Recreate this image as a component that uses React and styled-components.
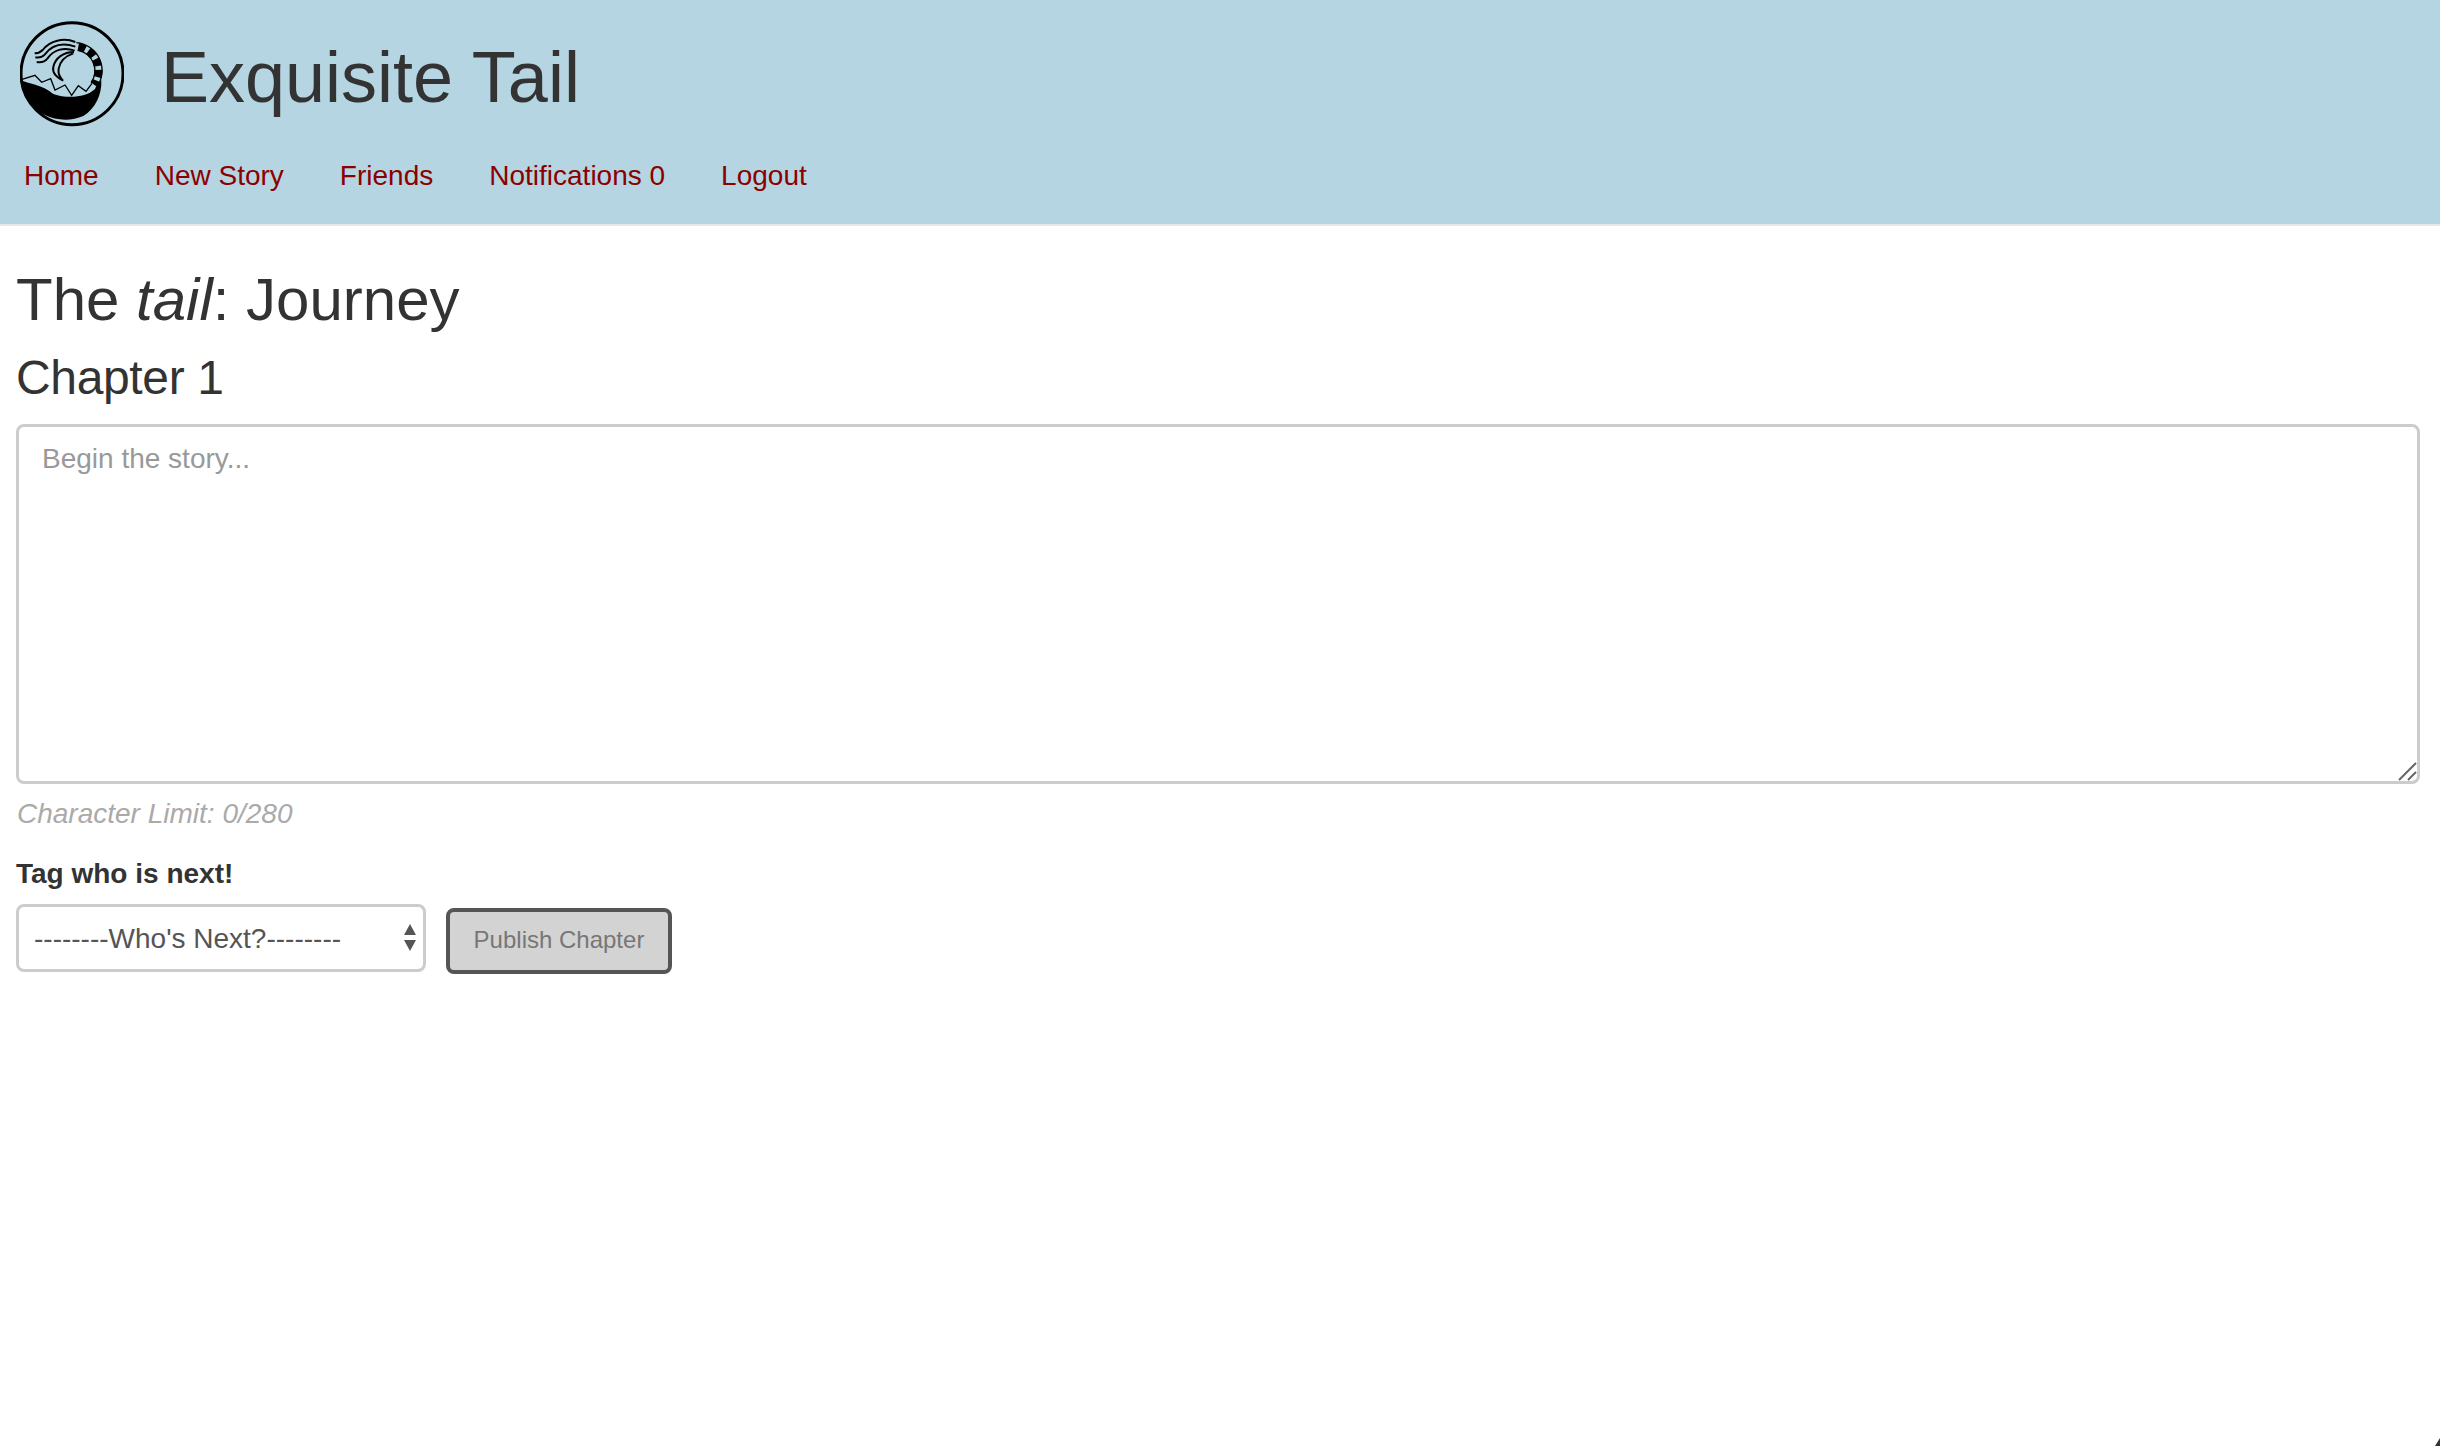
import React from "react";
import styled, { createGlobalStyle } from "styled-components";

const App = () => {
    return (
        <>
            <GlobalStyle />
            <Header>
                <Brand>
                    <Logo />
                    <Title>Exquisite Tail</Title>
                </Brand>
                <Nav>
                    <NavLink href="#">Home</NavLink>
                    <NavLink href="#">New Story</NavLink>
                    <NavLink href="#">Friends</NavLink>
                    <NavLink href="#">Notifications 0</NavLink>
                    <NavLink href="#">Logout</NavLink>
                </Nav>
            </Header>
            <Main>
                <StoryTitle>The <em>tail</em>: Journey</StoryTitle>
                <ChapterTitle>Chapter 1</ChapterTitle>
                <TextareaWrap>
                    <StoryInput placeholder="Begin the story..." />
                    <Grip width="20" height="20" viewBox="0 0 20 20">
                        <path d="M2 19L19 2M11 19L19 11" stroke="#666" strokeWidth="2" fill="none" />
                    </Grip>
                </TextareaWrap>
                <Limit>Character Limit: 0/280</Limit>
                <TagLabel>Tag who is next!</TagLabel>
                <FormRow>
                    <SelectWrap>
                        <NextSelect defaultValue="">
                            <option value="">--------Who's Next?--------</option>
                        </NextSelect>
                    </SelectWrap>
                    <PublishButton disabled>Publish Chapter</PublishButton>
                </FormRow>
            </Main>
            <CornerMark />
        </>
    );
};

// traced from the round wave and tail badge
const Logo = () => (
    <LogoSvg width="104" height="108" viewBox="60 60 312 324">
        <circle cx="216" cy="221" r="153" fill="none" stroke="#000" strokeWidth="9" />
        {/* black crescent */}
        <path
            d="M62 240C90 254 125 252 160 282C200 296 256 294 284 268L304 240C306 284 286 326 250 348C214 364 168 362 135 345C92 325 64 285 62 240Z"
            fill="#000"
        />
        {/* zigzag line over the crescent */}
        <path
            d="M66 238L105 226L125 247L152 236L165 270L195 255L215 286L235 257L258 274L276 250"
            fill="none"
            stroke="#000"
            strokeWidth="4"
        />
        {/* striped tail */}
        <path
            d="M235 140A73 73 0 0 1 282 254"
            fill="none"
            stroke="#000"
            strokeWidth="24"
            strokeDasharray="22 11"
        />
        <path
            d="M229 128A84 84 0 0 1 288 264M233 151A62 62 0 0 1 273 248"
            fill="none"
            stroke="#000"
            strokeWidth="4"
        />
        {/* hair strands */}
        <path
            d="M226 126C190 112 150 122 128 150C120 158 112 160 104 160M226 140C190 128 156 134 134 164C126 172 116 174 106 172M224 152C190 140 160 150 142 176C134 186 122 188 110 186M222 156C190 156 166 174 160 200C156 218 170 232 190 242M220 160C196 168 180 184 176 206C174 220 178 230 186 238"
            fill="none"
            stroke="#000"
            strokeWidth="6"
        />
    </LogoSvg>
);

export default App;

const GlobalStyle = createGlobalStyle`
    * {
        box-sizing: border-box;
    }
    body {
        margin: 0;
        background-color: white;
        color: #333;
        font-family: "Liberation Sans", Arial, sans-serif;
        font-size: 28px;
        line-height: 40px;
    }
`;

const Header = styled.header`
    height: 226px;
    background-color: #b5d5e2;
    border-bottom: 2px solid #e7e7e7;
    padding: 20px 0 0 20px;
`;
const Brand = styled.div`
    display: flex;
    align-items: center;
    gap: 37px;
    height: 108px;
`;
const LogoSvg = styled.svg`
    flex-shrink: 0;
`;
const Title = styled.h1`
    margin: 6px 0 0;
    font-size: 72px;
    font-weight: 400;
    line-height: 80px;
    color: #333;
`;
const Nav = styled.nav`
    display: flex;
    gap: 56px;
    margin: 28px 0 0 4px;
`;
const NavLink = styled.a`
    color: #8b0000;
    text-decoration: none;
    font-size: 28px;
    line-height: 40px;
`;
const Main = styled.main`
    padding: 0 20px 0 16px;
`;
const StoryTitle = styled.h2`
    margin: 41px 0 0;
    font-size: 60px;
    font-weight: 400;
    line-height: 66px;
`;
const ChapterTitle = styled.h3`
    margin: 19px 0 0;
    font-size: 48px;
    font-weight: 400;
    line-height: 52px;
    letter-spacing: -0.35px;
`;
const TextareaWrap = styled.div`
    position: relative;
    margin-top: 20px;
    height: 360px;
`;
const StoryInput = styled.textarea`
    display: block;
    width: 100%;
    height: 100%;
    padding: 12px 23px;
    border: 3px solid #ccc;
    border-radius: 8px;
    outline: none;
    resize: none;
    font-family: inherit;
    font-size: 28px;
    line-height: 40px;
    color: #555;

    &::placeholder {
        color: #999;
        opacity: 1;
    }
`;
const Grip = styled.svg`
    position: absolute;
    right: 3px;
    bottom: 3px;
`;
const Limit = styled.p`
    margin: 10px 0 0 1px;
    font-size: 28px;
    font-style: italic;
    color: #aaa;
`;
const TagLabel = styled.label`
    display: block;
    margin-top: 20px;
    font-weight: 700;
`;
const FormRow = styled.div`
    display: flex;
    align-items: flex-start;
    gap: 20px;
    margin-top: 10px;
`;
const SelectWrap = styled.div`
    position: relative;
    width: 410px;
    height: 68px;

    &::before,
    &::after {
        content: "";
        position: absolute;
        right: 10px;
        border-left: 6px solid transparent;
        border-right: 6px solid transparent;
        pointer-events: none;
    }
    &::before {
        top: 20px;
        border-bottom: 11px solid #555;
    }
    &::after {
        top: 36px;
        border-top: 11px solid #555;
    }
`;
const NextSelect = styled.select`
    appearance: none;
    width: 100%;
    height: 100%;
    padding: 0 15px;
    background-color: white;
    border: 3px solid #ccc;
    border-radius: 8px;
    font-family: inherit;
    font-size: 28px;
    color: #555;
`;
const PublishButton = styled.button`
    margin-top: 4px;
    width: 226px;
    height: 66px;
    padding: 0 0 2px;
    background-color: #d3d3d3;
    border: 4px solid #555;
    border-radius: 8px;
    font-family: inherit;
    font-size: 24px;
    color: #777;
`;
const CornerMark = styled.div`
    position: fixed;
    right: 0;
    bottom: 0;
    width: 0;
    height: 0;
    border-left: 5px solid transparent;
    border-bottom: 8px solid #2b3440;
`;
